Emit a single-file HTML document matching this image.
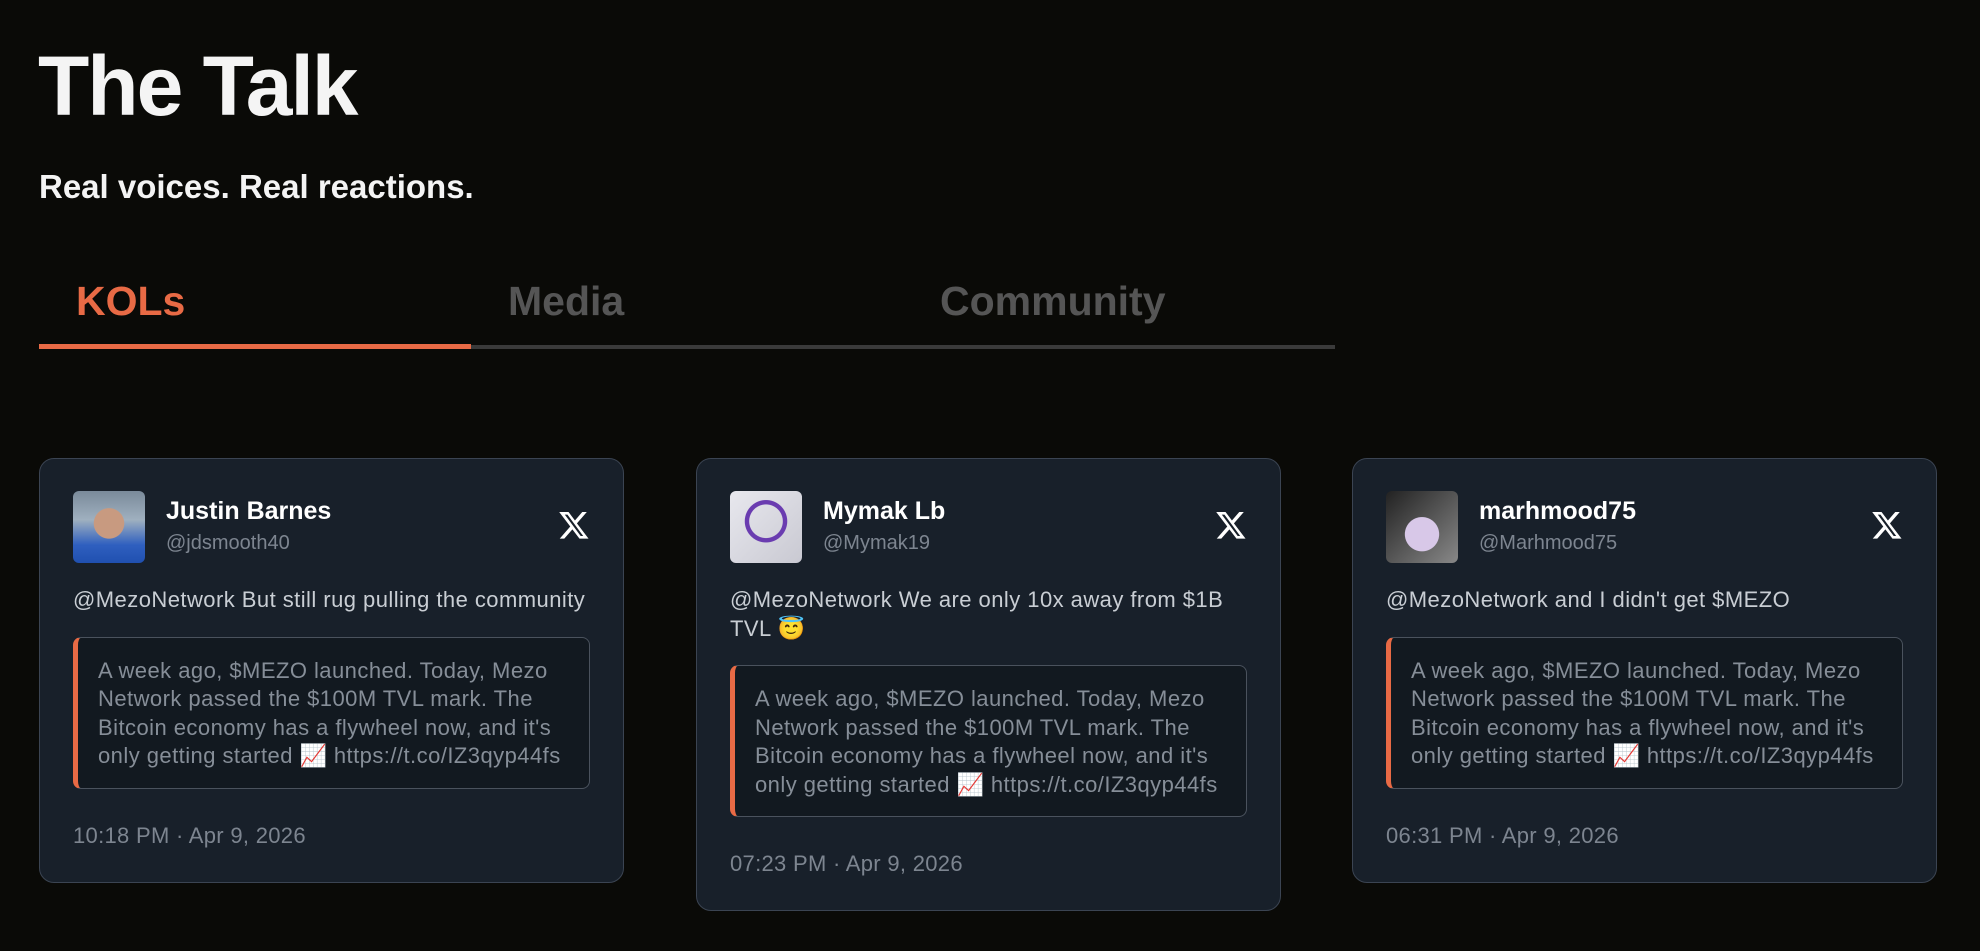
<!DOCTYPE html>
<html><head><meta charset="utf-8"><style>
*{box-sizing:border-box;margin:0;padding:0}
body{width:1980px;height:951px;background:#0a0a07;font-family:"Liberation Sans",sans-serif;overflow:hidden;position:relative}
h1{position:absolute;left:38px;top:36px;font-size:84px;font-weight:700;color:#f4f4f4;letter-spacing:-2px;line-height:100px}
.sub{position:absolute;left:39px;top:167px;font-size:33px;font-weight:700;color:#f4f4f4;line-height:40px;letter-spacing:0px}
.tabs{position:absolute;left:39px;top:270px;width:1296px;height:79px;border-bottom:4px solid #3a3a3a;display:flex}
.tab{width:432px;padding-left:37px;font-size:41px;font-weight:700;color:#555;line-height:62px}
.tab.on{color:#e86a45;border-bottom:5px solid #e86a45;margin-bottom:-4px}
.card{position:absolute;top:458px;width:585px;background:#18202a;border:1px solid #3b4452;border-radius:15px;padding:32px 33px 32px}
.hd{display:flex;height:72px;position:relative}
.av{width:72px;height:72px;border-radius:6px;flex:none}
.nm{margin-left:21px;padding-top:5px}
.nm b{display:block;color:#fff;font-size:25px;line-height:30px}
.nm span{display:block;color:#7d8590;font-size:20px;line-height:34px}
.x{position:absolute;right:-1px;top:18px}
.tx{margin-top:23px;color:#c9ced4;font-size:22px;line-height:28.5px;letter-spacing:0.45px}
.q{margin-top:22px;border:1px solid #4a525d;border-left:5px solid #e86a45;border-radius:8px;background:#121920;padding:19px 16px 17px 20px;color:#868e98;font-size:22px;line-height:28.5px;letter-spacing:0.45px}
.ts{margin-top:33px;color:#7d8590;font-size:22px;line-height:28px;letter-spacing:0.3px}
</style></head><body>
<h1>The Talk</h1>
<div class="sub">Real voices. Real reactions.</div>
<div class="tabs"><div class="tab on">KOLs</div><div class="tab">Media</div><div class="tab">Community</div></div>

<div class="card" style="left:39px">
<div class="hd"><div class="av" style="background:radial-gradient(circle at 50% 45%,#c89a80 0 28%,transparent 29%),linear-gradient(180deg,#7a8a9a 0%,#9fb0bf 40%,#2f5fbf 75%,#2050b0 100%)"></div>
<div class="nm"><b>Justin Barnes</b><span>@jdsmooth40</span></div>
<svg class="x" width="34" height="32" viewBox="0 0 24 24"><path fill="#fff" d="M18.2 2.25h3.4l-7.4 8.5 8.7 11.5h-6.8l-5.3-7-6.1 7H1.3l7.9-9.1L.9 2.25h7l4.8 6.4zm-1.2 18h1.9L7.1 4.2H5.1z"/></svg></div>
<div class="tx">@MezoNetwork But still rug pulling the community</div>
<div class="q">A week ago, $MEZO launched. Today, Mezo Network passed the $100M TVL mark. The Bitcoin economy has a flywheel now, and it's only getting started 📈 https://t.co/IZ3qyp44fs</div>
<div class="ts">10:18 PM · Apr 9, 2026</div>
</div>

<div class="card" style="left:696px">
<div class="hd"><div class="av" style="background:radial-gradient(circle at 50% 42%,transparent 0 30%,#6a3cb0 31% 38%,transparent 39%),linear-gradient(135deg,#e8e8ee,#c9c9d2)"></div>
<div class="nm"><b>Mymak Lb</b><span>@Mymak19</span></div>
<svg class="x" width="34" height="32" viewBox="0 0 24 24"><path fill="#fff" d="M18.2 2.25h3.4l-7.4 8.5 8.7 11.5h-6.8l-5.3-7-6.1 7H1.3l7.9-9.1L.9 2.25h7l4.8 6.4zm-1.2 18h1.9L7.1 4.2H5.1z"/></svg></div>
<div class="tx">@MezoNetwork We are only 10x away from $1B TVL 😇</div>
<div class="q">A week ago, $MEZO launched. Today, Mezo Network passed the $100M TVL mark. The Bitcoin economy has a flywheel now, and it's only getting started 📈 https://t.co/IZ3qyp44fs</div>
<div class="ts">07:23 PM · Apr 9, 2026</div>
</div>

<div class="card" style="left:1352px">
<div class="hd"><div class="av" style="background:radial-gradient(circle at 50% 60%,#d8c8e8 0 30%,transparent 31%),linear-gradient(135deg,#222 0%,#555 50%,#888 100%)"></div>
<div class="nm"><b>marhmood75</b><span>@Marhmood75</span></div>
<svg class="x" width="34" height="32" viewBox="0 0 24 24"><path fill="#fff" d="M18.2 2.25h3.4l-7.4 8.5 8.7 11.5h-6.8l-5.3-7-6.1 7H1.3l7.9-9.1L.9 2.25h7l4.8 6.4zm-1.2 18h1.9L7.1 4.2H5.1z"/></svg></div>
<div class="tx">@MezoNetwork and I didn't get $MEZO</div>
<div class="q">A week ago, $MEZO launched. Today, Mezo Network passed the $100M TVL mark. The Bitcoin economy has a flywheel now, and it's only getting started 📈 https://t.co/IZ3qyp44fs</div>
<div class="ts">06:31 PM · Apr 9, 2026</div>
</div>
</body></html>
